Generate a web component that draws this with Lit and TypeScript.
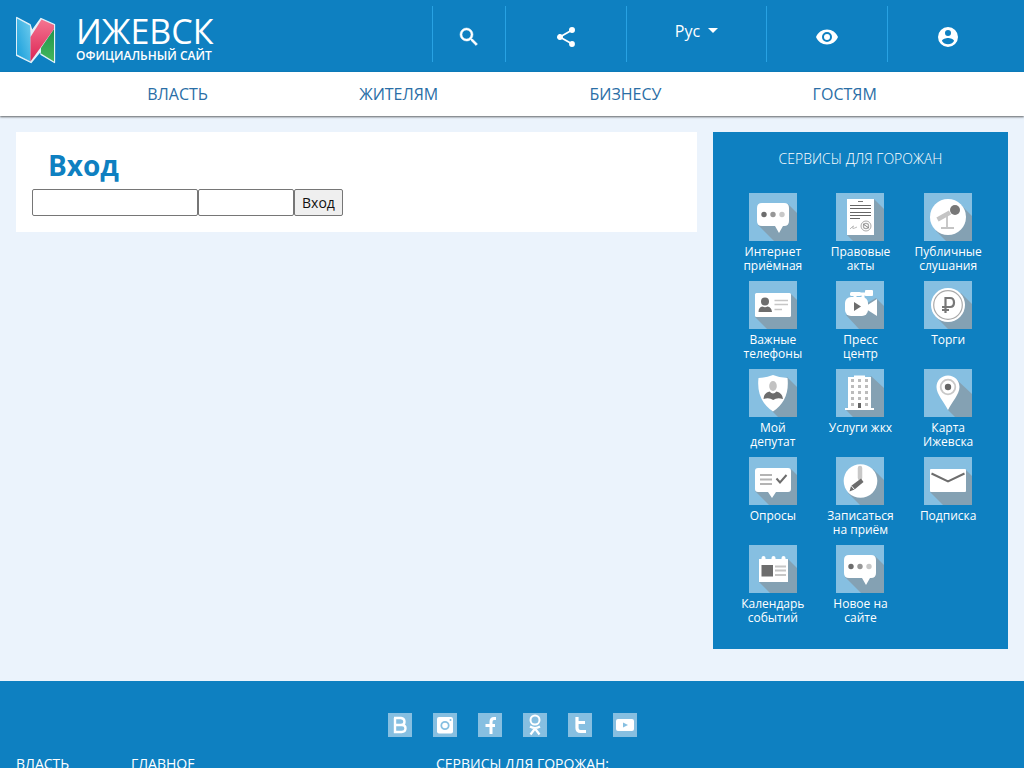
import { LitElement, html, css, svg } from "lit";
import { customElement } from "lit/decorators.js";

const shadow = (points: string) => svg`<polygon points=${points} fill="#84a1b3" />`;

const bubble = svg`
  ${shadow("39,11 48,20 48,48 25,48 9,32")}
  <path d="M13 10h22q5 0 5 5v13q0 5-5 5h-1l-4 7-4-7H13q-5 0-5-5V15q0-5 5-5z" fill="#fff" />
  <circle cx="15" cy="21.5" r="2.7" fill="#6d6d6d" />
  <circle cx="24" cy="21.5" r="2.7" fill="#979797" />
  <circle cx="33" cy="21.5" r="2.7" fill="#c8c8c8" />`;

const services = [
  { label: ["Интернет", "приёмная"], icon: bubble },
  {
    label: ["Правовые", "акты"],
    icon: svg`
      ${shadow("38,6 48,16 48,48 17,48 11,42")}
      <rect x="11" y="6" width="27" height="36" fill="#fff" />
      <path d="M22 8.5h5" stroke="#777" />
      <path d="M14 12.5h21M14 15.5h21M14 19.5h21M14 22.5h21M14 25.5h10" stroke="#666" />
      <path d="M14 36q5-5 3-2t4 0" stroke="#bbb" fill="none" />
      <circle cx="30" cy="33" r="5" fill="none" stroke="#aaa" stroke-width="1" />
      <circle cx="30" cy="33" r="2.6" fill="none" stroke="#aaa" stroke-width="1.2" />
      <path d="M27 31l6 4" stroke="#888" />`,
  },
  {
    label: ["Публичные", "слушания"],
    icon: svg`
      ${shadow("37,12 48,23 48,48 22,48 12,38")}
      <circle cx="24" cy="24" r="18" fill="#fff" />
      <path d="M13.5 26.5L26 19.500" stroke="#c4c4c4" stroke-width="4.5" />
      <path d="M23 23v12M17 35h13" stroke="#c4c4c4" stroke-width="1.8" />
      <circle cx="31" cy="17" r="5" fill="#777" />`,
  },
  {
    label: ["Важные", "телефоны"],
    icon: svg`
      ${shadow("42,13 48,19 48,48 18,48 6,36")}
      <rect x="6" y="12" width="36" height="24" rx="1.5" fill="#fff" />
      <circle cx="16" cy="20.5" r="4" fill="#6d6d6d" />
      <path d="M9.5 31q0-5 4-5.5 2.5 1.5 5 0 4 .5 4.5 5.5z" fill="#6d6d6d" />
      <path d="M25.5 19.5H39M25.5 23.5H39M25.5 28.5H33" stroke="#c6c6c6" stroke-width="1.7" />`,
  },
  {
    label: ["Пресс", "центр"],
    icon: svg`
      ${shadow("40,17 48,25 48,48 23,48 10,34")}
      <rect x="9" y="16" width="23" height="19" rx="6" fill="#fff" />
      <path d="M30 25l11-7v17l-11-7z" fill="#fff" />
      <rect x="14" y="11" width="11" height="4" rx="1.5" fill="#fff" />
      <rect x="29" y="9" width="8" height="6" rx="1" fill="#fff" />
      <path d="M20 13h11M19 13v5M27 13v4" stroke="#fff" stroke-width="3" />
      <path d="M18 21l7 4.5-7 4.5z" fill="#6d6d6d" />`,
  },
  {
    label: ["Торги"],
    icon: svg`
      ${shadow("37,12 48,23 48,48 24,48 12,36")}
      <circle cx="24" cy="24" r="17" fill="#fff" />
      <circle cx="24" cy="24" r="14.3" fill="none" stroke="#aaa" stroke-width="1.2" />
      <path d="M21.5 32V17H26q4 0 4 4.500t-4 4.500h-8M18 29h7" fill="none" stroke="#777" stroke-width="2.2" />`,
  },
  {
    label: ["Мой", "депутат"],
    icon: svg`
      ${shadow("38,8 48,18 48,48 29,48 21,40")}
      <path d="M9.5 9Q17 9 24 6q7 3 14.500 3Q41 31 24 42.500 7 31 9.500 9z" fill="#fff" />
      <ellipse cx="24" cy="17" rx="3.8" ry="5" fill="#c2c2c2" />
      <path d="M14.5 30q0-6 6-7.500 3.500 4 7 0 6 1.500 6.500 7.500-6-2-9.800 1-4-3-9.700-1z" fill="#6d6d6d" />`,
  },
  {
    label: ["Услуги жкх"],
    icon: svg`
      ${shadow("35,7 48,19 48,48 17,48 10,41")}
      <path d="M12 8h6V6.500h11V8h6v31h3v2H9v-2h3z" fill="#fff" />
      ${[11, 17, 23, 29, 35].map((y) =>
        [15, 22, 29].map((x) => svg`<rect x=${x} y=${y - 1} width="3" height="3" fill="#bcbcbc" />`)
      )}
      <rect x="22" y="34" width="3" height="5" fill="#666" />`,
  },
  {
    label: ["Карта", "Ижевска"],
    icon: svg`
      ${shadow("32,10 48,25 48,48 31,48 24,41")}
      <path d="M24 6.5c6.5 0 11.5 5 11.5 11.5C35.5 25 28 33 24 41c-4-8-11.500-16-11.500-23 0-6.500 5-11.500 11.500-11.500z" fill="#fff" />
      <circle cx="24" cy="18" r="7.3" fill="none" stroke="#c8c8c8" stroke-width="1.8" />
      <circle cx="24" cy="18" r="3.2" fill="#666" />`,
  },
  {
    label: ["Опросы"],
    icon: svg`
      ${shadow("42,12 48,18 48,48 20,48 6,34")}
      <path d="M9 11h30q3 0 3 3v18q0 3-3 3H27l-4 6-4-6H9q-3 0-3-3V14q0-3 3-3z" fill="#fff" />
      <path d="M11 18h12M11 22.500h12M11 27h12" stroke="#b4b4b4" stroke-width="2" />
      <path d="M27.5 21.500l3.500 4 6.500-7.500" fill="none" stroke="#6d6d6d" stroke-width="2" />`,
  },
  {
    label: ["Записаться", "на приём"],
    icon: svg`
      ${shadow("37,12 48,23 48,48 24,48 12,36")}
      <circle cx="24.5" cy="24" r="16.800" fill="#fff" />
      <path d="M24 11v10" stroke="#c8c8c8" stroke-width="4.5" stroke-linecap="round" />
      <path d="M25 21.500l2.500 3.500-9 7.500-5 2 1.500-5.500z" fill="#6d6d6d" />
      <path d="M15 28.500l3.500 4" stroke="#fff" />`,
  },
  {
    label: ["Подписка"],
    icon: svg`
      ${shadow("42,13 48,19 48,48 19,48 6,35")}
      <rect x="6" y="12" width="36" height="23" rx="1" fill="#fff" />
      <path d="M7.5 16.5L24 24.5l16.5-8" fill="none" stroke="#6d6d6d" stroke-width="2" />`,
  },
  {
    label: ["Календарь", "событий"],
    icon: svg`
      ${shadow("39,14 48,23 48,48 21,48 10,37")}
      <path d="M10 14h29v23H10z" fill="#fff" />
      <path d="M14.5 13v3M24.5 13v3M34.5 13v3" stroke="#fff" stroke-width="4" stroke-linecap="round" />
      <rect x="12.5" y="20" width="11.5" height="11.5" fill="#6d6d6d" />
      <path d="M26 21.500h11M26 25.500h11M26 30h11" stroke="#c6c6c6" stroke-width="1.8" />`,
  },
  { label: ["Новое на", "сайте"], icon: bubble },
];

const socials = [
  { name: "ВКонтакте", icon: svg`<path d="M7 5v14h6.500q4 0 4-3.700 0-3.300-3.500-3.300H7M13 12q3.500 0 3.500-3.300T13 5H6" fill="none" stroke="#fff" stroke-width="2.400" />` },
  {
    name: "Instagram",
    icon: svg`<rect x="4" y="4" width="16" height="16.500" rx="2" fill="#fff" />
      <circle cx="12" cy="12.500" r="3.700" fill="none" stroke="#86bfe1" stroke-width="1.800" />
      <circle cx="17.500" cy="7" r="1" fill="#86bfe1" />`,
  },
  { name: "Facebook", icon: svg`<path d="M18 5.500h-2q-3 0-3 3.500V21M7.500 12.500h9.500" fill="none" stroke="#fff" stroke-width="3" />` },
  { name: "Одноклассники", icon: svg`<circle cx="12" cy="7" r="4.500" fill="none" stroke="#fff" stroke-width="2" /><path d="M7 13.500q5 3 10 0M12 15.500l-4.500 6M12 15.500l4.500 6" fill="none" stroke="#fff" stroke-width="2.200" />` },
  { name: "Twitter", icon: svg`<path d="M9 4v11q0 3.500 3.500 3.500H18M9 9.500h8" fill="none" stroke="#fff" stroke-width="3.200" />` },
  { name: "YouTube", icon: svg`<path fill-rule="evenodd" d="M5 6h14q2 0 2 2v8q0 2-2 2H5q-2 0-2-2V8q0-2 2-2zm5 3.500v5l5-2.500z" fill="#fff" />` },
];

@customElement("app-root")
export class AppRoot extends LitElement {
  static styles = css`
    :host {
      display: block;
      min-height: 100vh;
      background: #ebf3fc;
      font-family: "Open Sans", "Noto Sans", sans-serif;
      font-size: 14px;
      color: #222;
    }
    * { box-sizing: border-box; }
    a { color: inherit; text-decoration: none; }
    svg { display: block; }
    .header {
      display: flex;
      height: 72px;
      padding: 0 16px;
      background: #0e80c1;
      color: #fff;
    }
    .brand { display: flex; gap: 20px; flex: 1; padding-top: 15px; }
    .city { font-size: 34px; font-weight: 400; line-height: 33px; }
    .tagline { font-size: 12px; font-weight: 600; line-height: 16px; }
    .tools { display: flex; align-items: flex-start; padding-top: 6px; }
    .tool {
      display: flex;
      align-items: center;
      justify-content: center;
      width: 121px;
      height: 56px;
      padding: 6px 0 0;
      border: 0;
      border-left: 1px solid #28a2e3;
      background: none;
      color: #fff;
      font: 16px/24px "Open Sans", sans-serif;
    }
    .tool.search { width: 73px; }
    .tool.lang { width: 140px; gap: 8px; align-items: flex-start; padding-top: 13px; }
    .caret {
      margin-top: 9px;
      border: 5px solid transparent;
      border-top-color: #fff;
      border-bottom: 0;
    }
    .menu {
      display: flex;
      justify-content: space-evenly;
      gap: 4px;
      height: 44px;
      background: #fff;
      box-shadow: 0 1px 2px rgba(0, 0, 0, 0.6);
      color: #2a6ea6;
      font-size: 16px;
      font-weight: 400;
      line-height: 44px;
    }
    .content { display: flex; align-items: flex-start; gap: 16px; padding: 16px 16px 32px; }
    .panel { flex: 1; padding: 16px; background: #fff; }
    .title {
      margin: 0 0 7px;
      padding-left: 16px;
      color: #0e80c1;
      font-size: 28px;
      line-height: 34px;
    }
    .login { display: flex; }
    .field, .submit {
      height: 27px;
      border: 1px solid #767676;
      border-radius: 2px;
      font: 14px/20px "Open Sans", sans-serif;
    }
    .field { width: 96px; background: #fff; }
    .field.name { width: 166px; }
    .submit { width: 49px; padding: 0; background: #efefef; color: #111; }
    .services {
      flex: 0 0 295px;
      padding: 16px;
      background: #0e80c1;
      color: #fff;
    }
    .caption {
      margin: 0 0 23px;
      font-size: 14px;
      font-weight: 300;
      line-height: 22px;
      text-align: center;
    }
    .grid { display: grid; grid-template-columns: repeat(3, 1fr); grid-auto-rows: 88px; }
    .service {
      display: flex;
      flex-direction: column;
      align-items: center;
      gap: 4px;
      font-size: 12px;
      font-weight: 500;
      line-height: 14px;
      text-align: center;
    }
    .line { display: block; white-space: nowrap; }
    .tile { background: #86bfe1; }
    .footer { padding: 32px 16px 16px; background: #0e80c1; color: #fff; }
    .socials { display: flex; justify-content: center; gap: 21px; margin-bottom: 17px; }
    .columns { display: grid; grid-template-columns: 115px 305px 1fr; line-height: 20px; }
  `;

  render() {
    return html`
      <header class="header">
        <a class="brand" href="#">
          <svg width="40" height="50" viewBox="0 0 40 50" aria-hidden="true">
            <defs>
              <linearGradient id="sky" x1="1" y1="0" x2="0" y2="1"><stop stop-color="#70cced" /><stop offset="1" stop-color="#159ddb" /></linearGradient>
              <linearGradient id="rose" x1="0" y1="0" x2="0" y2="1"><stop stop-color="#f47591" /><stop offset="1" stop-color="#dc2454" /></linearGradient>
              <linearGradient id="leaf" x1="0" y1="0" x2="0" y2="1"><stop stop-color="#1f944d" /><stop offset="1" stop-color="#46b75c" /></linearGradient>
            </defs>
            <path d="M.7 2.5L14 9.5 16 16 25 3.500 38.500 9.500V47.500L25 39.500V35.500L15 47.500.7 40.500z" fill="#e3f2fa" stroke="#e3f2fa" stroke-width="1.300" stroke-linejoin="round" />
            <path d="M1 3.500L14 10.500 14.500 18V46.500L1 39.500z" fill="url(#sky)" />
            <path d="M38 14v32.500L25 38.500V33z" fill="url(#leaf)" />
            <path d="M14.500 46.500V22L25.500 4.500 38 10V14z" fill="url(#rose)" />
          </svg>
          <div>
            <div class="city">ИЖЕВСК</div>
            <div class="tagline">ОФИЦИАЛЬНЫЙ САЙТ</div>
          </div>
        </a>
        <div class="tools">
          <button class="tool search" aria-label="Поиск">
            <svg width="24" height="24" viewBox="0 0 24 24" fill="#fff" stroke="#fff" stroke-width=".5"><path d="M15.5 14h-.79l-.28-.27A6.470 6.470 0 0 0 16 9.500 6.500 6.500 0 1 0 9.500 16c1.610 0 3.090-.59 4.230-1.570l.27.28v.79l5 4.990L20.490 19l-4.990-5zm-6 0a4.500 4.500 0 1 1 0-9 4.500 4.500 0 0 1 0 9z" /></svg>
          </button>
          <button class="tool" aria-label="Поделиться">
            <svg width="24" height="24" viewBox="0 0 24 24" fill="#fff"><path d="M18 16.080c-.76 0-1.440.3-1.960.77L8.910 12.700c.05-.23.09-.46.09-.7s-.04-.47-.09-.7l7.050-4.110c.54.5 1.250.81 2.040.81a3 3 0 1 0-3-3c0 .24.04.47.09.7L8.040 9.810A3 3 0 1 0 6 15c.79 0 1.500-.31 2.040-.81l7.120 4.160c-.05.21-.08.43-.08.65A2.920 2.920 0 1 0 18 16.080z" /></svg>
          </button>
          <button class="tool lang">Рус<span class="caret"></span></button>
          <button class="tool" aria-label="Версия для слабовидящих">
            <svg width="24" height="24" viewBox="0 0 24 24" fill="#fff"><path d="M12 4.500C7 4.500 2.730 7.610 1 12c1.730 4.390 6 7.500 11 7.500s9.270-3.110 11-7.500c-1.730-4.390-6-7.500-11-7.500zM12 17a5 5 0 1 1 0-10 5 5 0 0 1 0 10zm0-8a3 3 0 1 0 0 6 3 3 0 0 0 0-6z" /></svg>
          </button>
          <button class="tool" aria-label="Личный кабинет">
            <svg width="24" height="24" viewBox="0 0 24 24" fill="#fff"><path d="M12 2a10 10 0 1 0 0 20 10 10 0 0 0 0-20zm0 3a3 3 0 1 1 0 6 3 3 0 0 1 0-6zm0 14.200a7.200 7.200 0 0 1-6-3.220c.03-1.990 4-3.080 6-3.080s5.970 1.090 6 3.080a7.200 7.200 0 0 1-6 3.220z" /></svg>
          </button>
        </div>
      </header>
      <nav class="menu">
        ${["ВЛАСТЬ", "ЖИТЕЛЯМ", "БИЗНЕСУ", "ГОСТЯМ"].map((t) => html`<a href="#">${t}</a>`)}
      </nav>
      <div class="content">
        <main class="panel">
          <h1 class="title">Вход</h1>
          <form class="login">
            <input class="field name" type="text" aria-label="Логин" />
            <input class="field" type="password" aria-label="Пароль" />
            <button class="submit" type="button">Вход</button>
          </form>
        </main>
        <aside class="services">
          <h2 class="caption">СЕРВИСЫ ДЛЯ ГОРОЖАН</h2>
          <div class="grid">
            ${services.map(
              (s) => html`<a class="service" href="#">
                <svg class="tile" width="48" height="48" viewBox="0 0 48 48" aria-hidden="true">${s.icon}</svg>
                <span>${s.label.map((l) => html`<span class="line">${l}</span>`)}</span>
              </a>`
            )}
          </div>
        </aside>
      </div>
      <footer class="footer">
        <div class="socials">
          ${socials.map(
            (s) => html`<a href="#" aria-label=${s.name}><svg class="tile" width="24" height="24" viewBox="0 0 24 24">${s.icon}</svg></a>`
          )}
        </div>
        <div class="columns">
          <a href="#">ВЛАСТЬ</a>
          <a href="#">ГЛАВНОЕ</a>
          <span>СЕРВИСЫ ДЛЯ ГОРОЖАН:</span>
        </div>
      </footer>
    `;
  }
}
